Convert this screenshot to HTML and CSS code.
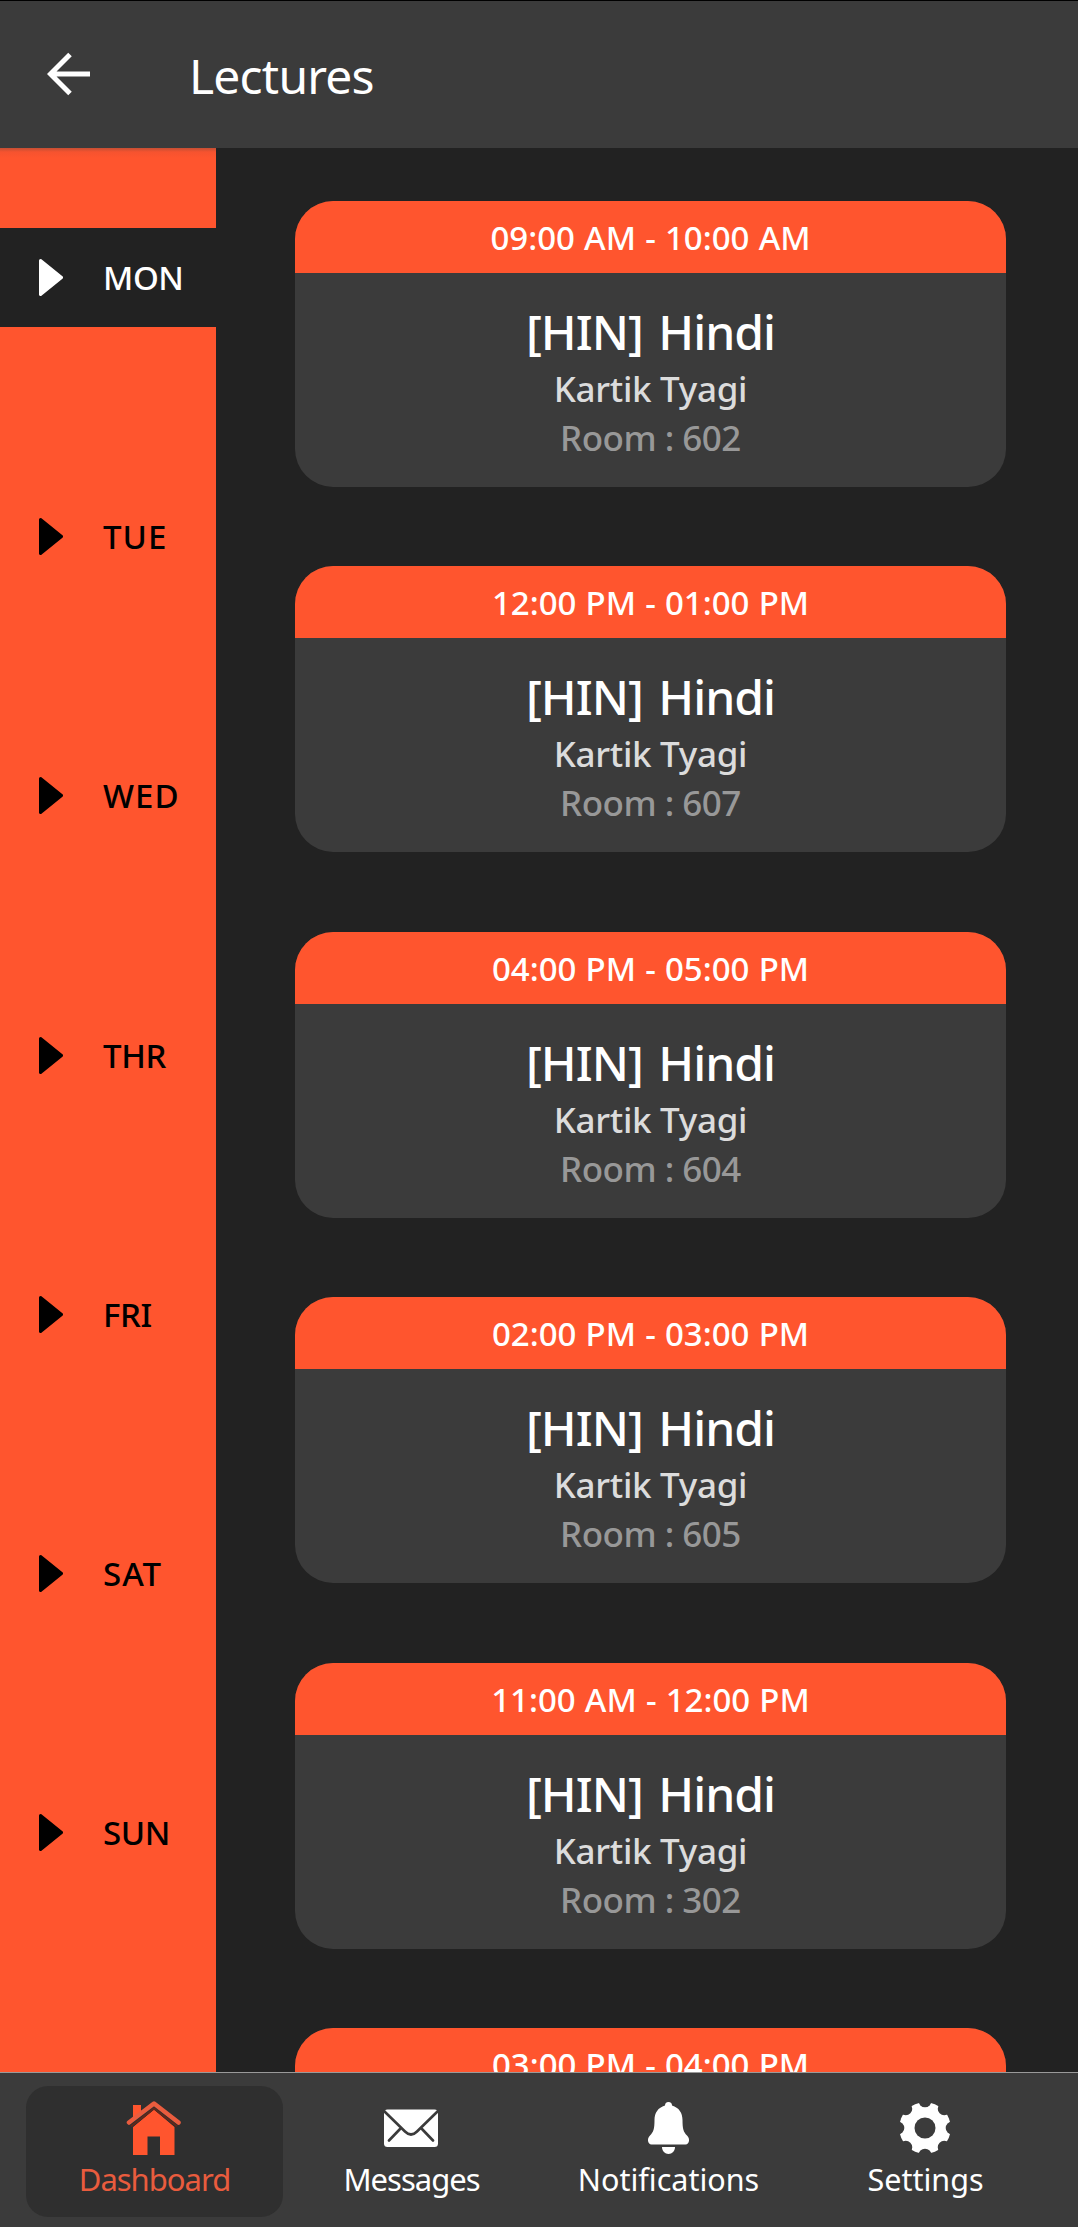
FILE: index.html
```html
<!DOCTYPE html>
<html lang="en">
<head>
<meta charset="utf-8">
<title>Lectures</title>
<link rel="stylesheet" href="styles.css">
</head>
<body>
<div class="app">
  <header class="topbar">
    <svg class="back" viewBox="0 0 44 44"><path d="M43 22H5M23 2.500L3.500 22l19.500 19.500" fill="none" stroke="#fff" stroke-width="5"/></svg>
    <h1 class="title">Lectures</h1>
  </header>
  <div class="content">
    <nav class="days">
      <div class="day day-active"><svg class="play" viewBox="0 0 24 37"><path d="M1.500 1.500L22.500 18.500L1.500 35.500Z"/></svg><span class="tight">MON</span></div>
      <div class="day"><svg class="play" viewBox="0 0 24 37"><path d="M1.500 1.500L22.500 18.500L1.500 35.500Z"/></svg><span>TUE</span></div>
      <div class="day"><svg class="play" viewBox="0 0 24 37"><path d="M1.500 1.500L22.500 18.500L1.500 35.500Z"/></svg><span>WED</span></div>
      <div class="day"><svg class="play" viewBox="0 0 24 37"><path d="M1.500 1.500L22.500 18.500L1.500 35.500Z"/></svg><span class="tight">THR</span></div>
      <div class="day"><svg class="play" viewBox="0 0 24 37"><path d="M1.500 1.500L22.500 18.500L1.500 35.500Z"/></svg><span class="tight">FRI</span></div>
      <div class="day"><svg class="play" viewBox="0 0 24 37"><path d="M1.500 1.500L22.500 18.500L1.500 35.500Z"/></svg><span>SAT</span></div>
      <div class="day"><svg class="play" viewBox="0 0 24 37"><path d="M1.500 1.500L22.500 18.500L1.500 35.500Z"/></svg><span class="tight">SUN</span></div>
    </nav>
    <main class="lectures">
      <article class="card"><div class="time">09:00 AM - 10:00 AM</div><h2 class="subject">[HIN] Hindi</h2><p class="teacher">Kartik Tyagi</p><p class="room">Room : 602</p></article>
      <article class="card"><div class="time">12:00 PM - 01:00 PM</div><h2 class="subject">[HIN] Hindi</h2><p class="teacher">Kartik Tyagi</p><p class="room">Room : 607</p></article>
      <article class="card"><div class="time">04:00 PM - 05:00 PM</div><h2 class="subject">[HIN] Hindi</h2><p class="teacher">Kartik Tyagi</p><p class="room">Room : 604</p></article>
      <article class="card"><div class="time">02:00 PM - 03:00 PM</div><h2 class="subject">[HIN] Hindi</h2><p class="teacher">Kartik Tyagi</p><p class="room">Room : 605</p></article>
      <article class="card"><div class="time">11:00 AM - 12:00 PM</div><h2 class="subject">[HIN] Hindi</h2><p class="teacher">Kartik Tyagi</p><p class="room">Room : 302</p></article>
      <article class="card"><div class="time">03:00 PM - 04:00 PM</div></article>
    </main>
  </div>
  <nav class="tabs">
    <a class="tab tab-active">
      <svg class="icon" viewBox="0 0 56 56"><path d="M7 27L28 9.500 48.500 27V55H34V36.500H21.500V55H7Z" fill="#ff552e"/><path d="M3 25L28 4.500 53 25" fill="none" stroke="#2f2f2f" stroke-width="8"/><path d="M7 5h8v7L7 18.500z" fill="#ff552e"/><path d="M3 22.500L28 3.500 52.500 22.500" fill="none" stroke="#e95c3e" stroke-width="4.500" stroke-linecap="round" stroke-linejoin="round"/><path d="M5 26.200L28 8.400 51 26.200" fill="none" stroke="#61281b" stroke-width="2"/></svg>
      <span class="dense">Dashboard</span>
    </a>
    <a class="tab">
      <svg class="icon" viewBox="0 0 56 56"><rect x="1" y="9.500" width="54" height="37.500" rx="3.500" fill="#fff"/><path d="M1 11L22 31.500Q28 37.500 34 31.500L55 11M17.500 28.500L6 40.500M38.500 28.500L50 40.500" fill="none" stroke="#3b3b3b" stroke-width="2.600" stroke-linecap="round"/></svg>
      <span class="dense">Messages</span>
    </a>
    <a class="tab">
      <svg class="icon" viewBox="0 0 56 56"><path d="M25 5.500a3.500 3.500 0 0 1 7 0C39 7.500 42.500 13 42.500 20c0 9 1 12 4.500 15.500 2 2 2 3.500 2 5 0 2-1.500 4-3.500 4h-34c-2 0-3.500-2-3.500-4 0-1.500 0-3 2-5 3.500-3.500 4.500-6.500 4.500-15.500 0-7 3.500-12.500 10.500-14.500Z" fill="#fff"/><path d="M22 47h13c0 4-3 7-6.500 7S22 51 22 47Z" fill="#fff"/></svg>
      <span>Notifications</span>
    </a>
    <a class="tab">
      <svg class="icon" viewBox="0 0 56 56"><defs><mask id="cog"><circle cx="28" cy="28" r="25.800" fill="#fff"/><g fill="#000"><circle cx="28" cy="28" r="10.500"/><circle id="n" cx="28" cy="0.800" r="6.500"/><use href="#n" transform="rotate(45 28 28)"/><use href="#n" transform="rotate(90 28 28)"/><use href="#n" transform="rotate(135 28 28)"/><use href="#n" transform="rotate(180 28 28)"/><use href="#n" transform="rotate(225 28 28)"/><use href="#n" transform="rotate(270 28 28)"/><use href="#n" transform="rotate(315 28 28)"/></g></mask></defs><rect width="56" height="56" fill="#fff" mask="url(#cog)"/></svg>
      <span>Settings</span>
    </a>
  </nav>
</div>
</body>
</html>
```
FILE: styles.css
```css
* { box-sizing: border-box; }
body { margin: 0; background: #222; color: #fff; font-family: "Noto Sans", sans-serif; }
svg { display: block; flex: none; }
h1, h2, p { margin: 0; }
.app { height: 2227px; display: flex; flex-direction: column; overflow: hidden; }
.topbar { height: 148px; flex: none; display: flex; align-items: center; gap: 98px; padding: 2px 47px 0; background: #3b3b3b; border-top: 1px solid #000; }
.back { width: 44px; height: 44px; margin-bottom: 3px; }
.title { font-size: 48px; font-weight: 400; letter-spacing: -0.8px; line-height: 66px; padding-top: 1px; }
.content { height: 1924px; flex: none; display: flex; overflow: hidden; }
.days { width: 216px; flex: none; display: flex; flex-direction: column; gap: 160.2px; padding-top: 80px; color: #000; background: linear-gradient(#c34f34, #f6532f 4px, #ff552e 10px); }
.day { height: 99px; flex: none; display: flex; align-items: center; gap: 40px; padding-left: 39px; font-size: 33px; font-weight: 500; letter-spacing: 1px; }
.day .tight { letter-spacing: -0.4px; }
.day-active { background: #222; color: #fff; }
.play { width: 24px; height: 37px; fill: currentColor; stroke: currentColor; stroke-width: 3; stroke-linejoin: round; }
.lectures { flex: 1; display: flex; flex-direction: column; gap: 79.4px; padding: 53px 72px 0 79px; }
.card { height: 286px; flex: none; border-radius: 38px; overflow: hidden; background: #3b3b3b; text-align: center; font-weight: 500; }
.time { height: 72px; margin-bottom: 27px; line-height: 74px; font-size: 33px; word-spacing: 0.6px; background: #ff552e; }
.subject { font-size: 48px; font-weight: 500; line-height: 64px; letter-spacing: -1px; word-spacing: 4px; }
.teacher { font-size: 35px; line-height: 49px; letter-spacing: -0.3px; color: #dcdcdc; }
.room { font-size: 35px; line-height: 49px; letter-spacing: -0.5px; color: #989898; }
.tabs { height: 155px; flex: none; display: flex; padding: 13px 24px 10px 26px; border-top: 1px solid #999; background: #3b3b3b; }
.tab { width: 257px; flex: none; display: flex; flex-direction: column; align-items: center; gap: 5px; padding-top: 14px; border-radius: 22px; font-size: 30.500px; line-height: 37px; }
.tab-active { background: #2f2f2f; color: #e95c3e; }
.tab .dense { font-size: 31px; letter-spacing: -1px; }
.icon { width: 56px; height: 56px; margin-right: 2px; }
```
